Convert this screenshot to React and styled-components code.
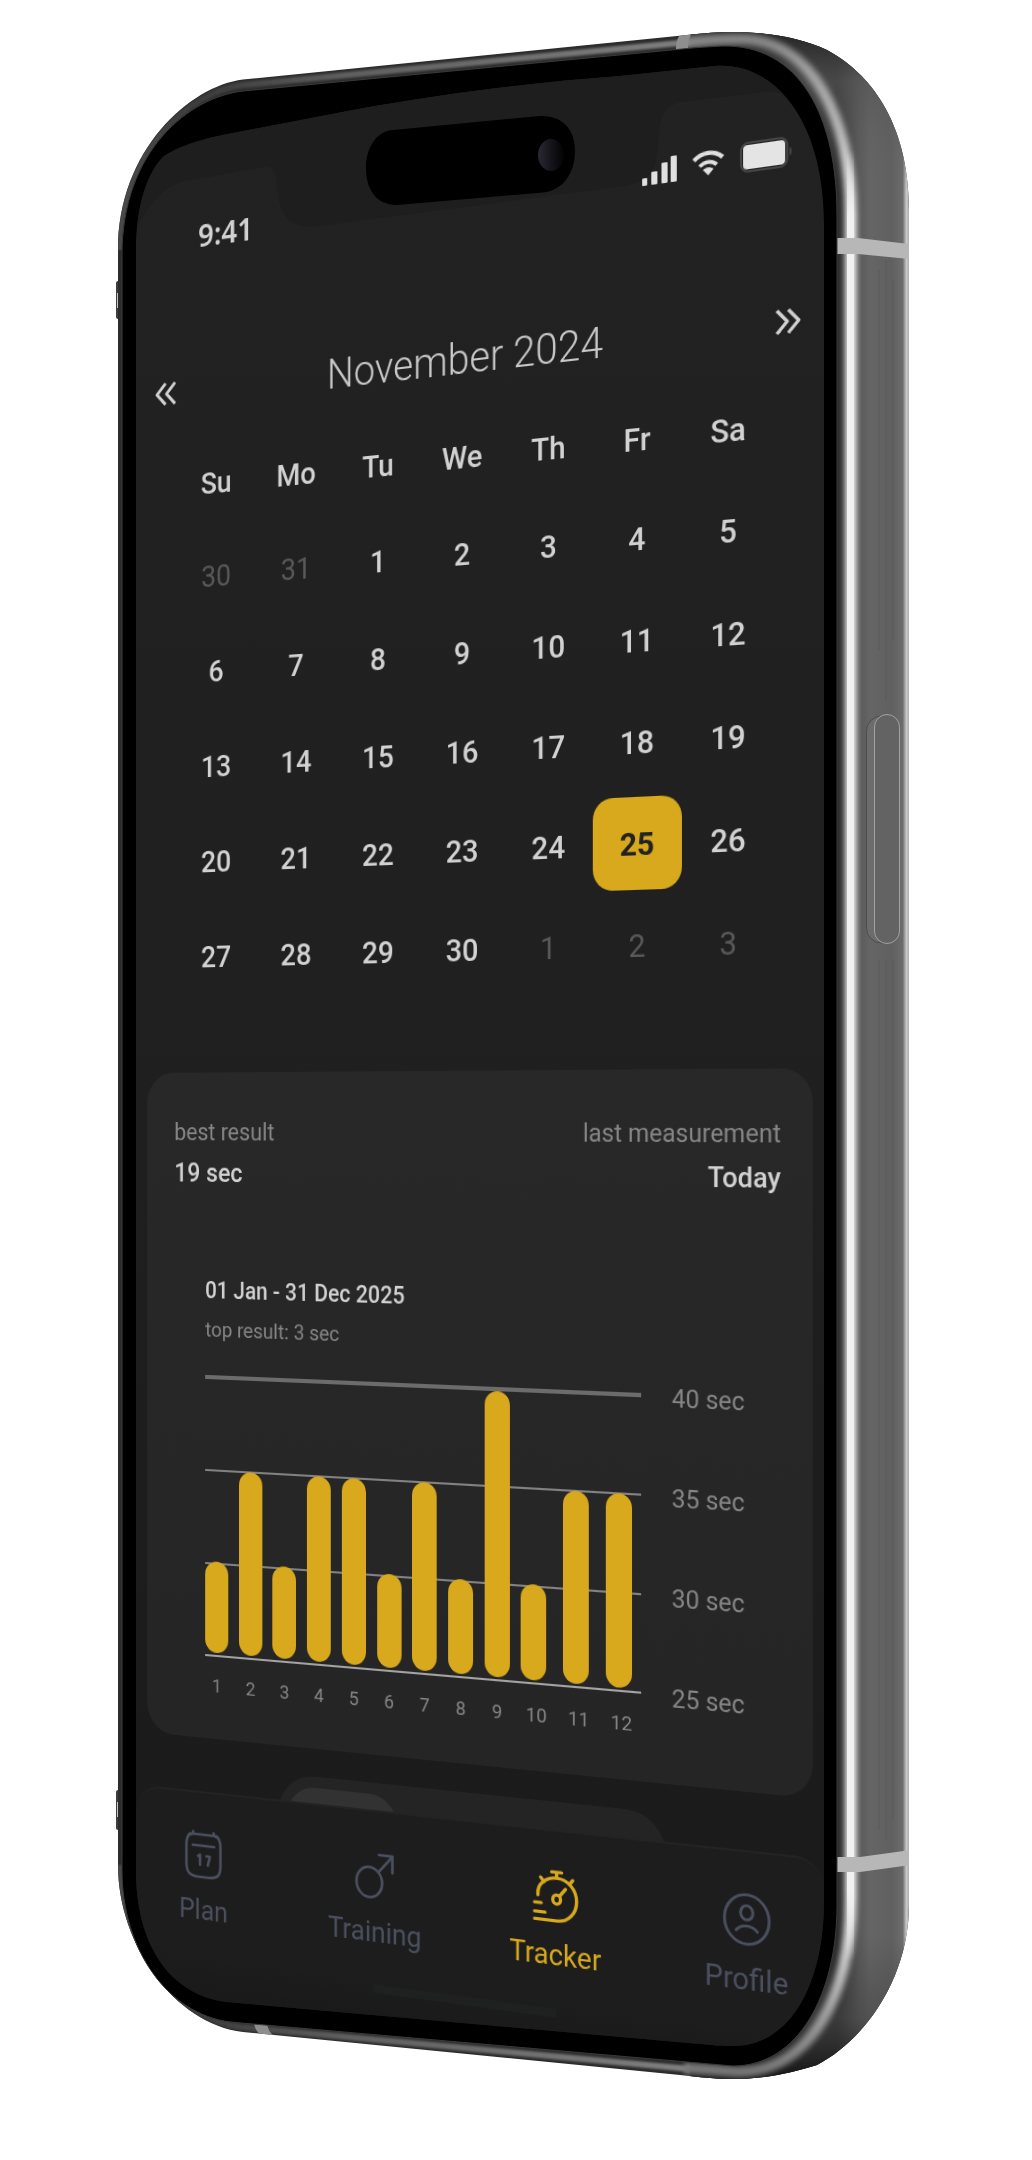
import React, { useState } from "react";
import styled, { createGlobalStyle } from "styled-components";

const GlobalStyle = createGlobalStyle`
  *, *::before, *::after { box-sizing: border-box; }
  body { margin: 0; background: #fff; }
`;

const colors = {
  text: "#d2d2d2",
  soft: "#868686",
  muted: "#595959",
  accent: "#d8a91d",
  nav: "#4b5060",
  ink: "#222222",
};

/* ---------- layout ---------- */

const Stage = styled.main`
  display: flex;
  justify-content: center;
  min-height: 100vh;
  padding: 24px 0 48px;
`;

const Phone = styled.div`
  position: relative;
  flex: none;
  width: 800px;
`;

const FrameArt = styled.svg`
  position: absolute;
  inset: 0;
  display: block;
`;

const Glass = styled.div`
  position: relative;
  height: 100%;
  padding: 0 65px 64px 20px;
  clip-path: url(#glass-clip);
`;

const Screen = styled.div`
  display: flex;
  flex-direction: column;
  transform-origin: 0 1093px;
  transform: perspective(3550px) rotateY(-30deg);
  color: ${colors.text};
  font-family: Roboto, "Liberation Sans", sans-serif;
`;

const StatusBar = styled.header`
  display: flex;
  align-items: center;
  justify-content: space-between;
  height: 48px;
  margin-top: 196px;
  padding: 0 30px 0 71px;
`;

const Clock = styled.time`
  font: 600 31px/48px "Noto Sans", sans-serif;
`;

const StatusIcons = styled.div`
  display: flex;
  align-items: center;
  gap: 15px;
`;

const MonthBar = styled.div`
  display: flex;
  align-items: center;
  justify-content: space-between;
  height: 60px;
  margin-top: 99px;
  padding: 0 18px;
`;

const MonthTitle = styled.h1`
  margin: 0;
  font-size: 41px;
  line-height: 60px;
  font-weight: 300;
  color: #c8c8c8;
`;

const IconButton = styled.button`
  display: grid;
  place-items: center;
  width: 32px;
  height: 40px;
  padding: 0;
  border: 0;
  background: none;
  color: ${colors.text};
  cursor: pointer;
`;

const CalendarSection = styled.section`
  margin: 18px 47px 0;
`;

const CalendarTable = styled.table`
  width: 100%;
  border-collapse: collapse;
  table-layout: fixed;
`;

const WeekdayCell = styled.th`
  height: 90px;
  padding: 0;
  font-size: 30px;
  font-weight: 500;
`;

const DayCell = styled.td`
  height: 94px;
  padding: 0;
`;

const DayButton = styled.button`
  display: block;
  width: 100%;
  height: 86px;
  padding: 0;
  border: 0;
  border-radius: 20px;
  background: ${(p) => (p.$selected ? colors.accent : "transparent")};
  color: ${(p) => (p.$selected ? colors.ink : p.$outside ? colors.muted : colors.text)};
  font-family: inherit;
  font-size: 30px;
  font-weight: ${(p) => (p.$selected ? 700 : p.$outside ? 400 : 500)};
  cursor: pointer;
`;

const Card = styled.section`
  height: 658px;
  margin: 68px 11px 0 13px;
  padding: 39px 30px 0 31px;
  border-radius: 30px;
  background: linear-gradient(180deg, #282828, #252525);
`;

const Summary = styled.dl`
  display: flex;
  justify-content: space-between;
  margin: 0;
`;

const Stat = styled.div`
  text-align: ${(p) => (p.$end ? "right" : "left")};
`;

const StatLabel = styled.dt`
  font-size: 24px;
  line-height: 40px;
  color: ${colors.soft};
`;

const StatValue = styled.dd`
  margin: 0;
  font-size: 26px;
  line-height: 40px;
  font-weight: 500;
`;

const ChartBlock = styled.div`
  padding: 78px 0 0 35px;
`;

const ChartTitle = styled.h2`
  margin: 0;
  font-size: 23px;
  line-height: 38px;
  font-weight: 500;
`;

const ChartNote = styled.p`
  margin: 0 0 15px;
  font-size: 21px;
  line-height: 38px;
  color: ${colors.soft};
`;

const ChartGrid = styled.div`
  display: grid;
  grid-template-columns: 460px auto;
  column-gap: 30px;
`;

const Plot = styled.div`
  display: grid;
  align-items: start;
  padding-top: 11px;
`;

const GridLines = styled.div`
  grid-area: 1 / 1;
  display: flex;
  flex-direction: column;
  justify-content: space-between;
  height: 278px;
`;

const GridLine = styled.span`
  height: ${(p) => (p.$top ? 4 : 2)}px;
  background: ${(p) => (p.$base ? "#a3a3a3" : p.$top ? "#6c6c6c" : "#828282")};
`;

const Bars = styled.ol`
  grid-area: 1 / 1;
  display: flex;
  justify-content: space-between;
  width: 456px;
  margin: 0;
  padding: 0;
  list-style: none;
`;

const BarColumn = styled.li`
  display: flex;
  flex-direction: column;
  justify-content: flex-end;
  width: ${(p) => (p.$wide ? 31 : 26)}px;
  height: 322px;
`;

const Bar = styled.span`
  width: 26px;
  border-radius: 13px;
  background: ${colors.accent};
`;

const BarLabel = styled.span`
  margin-top: 18px;
  font-size: 19px;
  line-height: 30px;
  text-align: center;
  color: ${colors.soft};
`;

const Scale = styled.div`
  display: flex;
  flex-direction: column;
  justify-content: space-between;
  height: 306px;
  font-size: 24px;
  line-height: 30px;
  color: ${colors.soft};
`;

const Peek = styled.div`
  height: 26px;
  margin-top: 27px;
  padding: 0 151px 0 160px;
  overflow: hidden;
`;

const Segments = styled.div`
  height: 80px;
  padding: 11px;
  border-radius: 40px;
  background: #242424;
`;

const ActiveSegment = styled.div`
  width: 118px;
  height: 58px;
  border-radius: 29px;
  background: #323232;
`;

const NavBar = styled.nav`
  display: flex;
  align-items: flex-start;
  justify-content: space-between;
  height: 225px;
  padding: 36px 10px 0 13px;
  border-top: 2px solid #232323;
  border-radius: 28px 28px 0 0;
  background: linear-gradient(180deg, #1d1d1d 0 70%, #181818);
`;

const NavLink = styled.a`
  display: flex;
  flex-direction: column;
  align-items: center;
  gap: 12px;
  width: 128px;
  color: ${(p) => (p.$active ? colors.accent : colors.nav)};
  font-size: 28px;
  line-height: 36px;
  text-decoration: none;
`;

const NavIcon = styled.span`
  display: grid;
  place-items: center;
  height: 50px;
`;

const HomeIndicator = styled.span`
  width: 190px;
  height: 8px;
  margin: -57px 0 0 264px;
  background: #1f2020;
`;

/* ---------- data ---------- */

const weekdays = ["Su", "Mo", "Tu", "We", "Th", "Fr", "Sa"];

const weeks = [
  [30, 31, 1, 2, 3, 4, 5],
  [6, 7, 8, 9, 10, 11, 12],
  [13, 14, 15, 16, 17, 18, 19],
  [20, 21, 22, 23, 24, 25, 26],
  [27, 28, 29, 30, 1, 2, 3],
];

const isOutside = (week, day) => (week === 0 && day > 7) || (week === 4 && day < 7);

const results = [30, 35, 30, 35, 35, 30, 35, 30, 40, 30, 35, 35];
const barHeight = (seconds) => (seconds - 25) * 18;
const scale = [40, 35, 30, 25];

/* ---------- device artwork ---------- */

const silhouette =
  "M118 250C118 150 190 86 243 79.500L687 35C705 33 718 32 733 32C765 32 800 37 827 50C868 72 909 120 909 210L909 1905C909 1975 868 2038 817 2065C795 2072 765 2079 733 2079C715 2079 700 2077 680 2075L243 2032C175 2024 118 1945 118 1865Z";
const bezel =
  "M122 255C122 150 190 97 243 91L687 48.500C697 47.500 705 47 715 46.500C792 40 837 105 837 215L837 1905C837 1995 798 2066 733 2066L230 2022C168 2014 122 1950 122 1870Z";
const glass =
  "M136 250C136 205 148 172 163 157C178 146 205 138 233 133L353 110C450 92 540 82 620 76L715 66C775 62 824 120 824 225L824 1900C824 1985 790 2046 733 2046C720 2046 712 2045 700 2044L227 2002C170 1995 136 1945 136 1870Z";
const rim =
  "M684 42.500C705 40 722 39 740 39C812 39 851 118 851 215L851 1900C851 1995 810 2072 738 2072L684 2068";
const topEdge = "M120 250C120 152 190 91 243 85L690 42";
const bottomEdge = "M120 1865C120 1945 172 2018 240 2027L690 2069";

function DeviceFrame() {
  return (
    <FrameArt viewBox="116 24 800 2064" width="800" height="2064" aria-hidden="true">
      <defs>
        <clipPath id="glass-clip" clipPathUnits="userSpaceOnUse">
          <path d={glass} transform="translate(-116 -24)" />
        </clipPath>
        <clipPath id="body-clip">
          <path d={silhouette} />
        </clipPath>
        <clipPath id="glass-area">
          <path d={glass} />
        </clipPath>
        <linearGradient id="side" gradientUnits="userSpaceOnUse" x1="837" x2="910" y1="0" y2="0">
          <stop offset="0" stopColor="#2a2a2a" />
          <stop offset=".3" stopColor="#585858" />
          <stop offset=".45" stopColor="#656565" />
          <stop offset=".75" stopColor="#606060" />
          <stop offset=".9" stopColor="#6c6c6c" />
          <stop offset=".95" stopColor="#c9c9c9" />
          <stop offset="1" stopColor="#a5a5a5" />
        </linearGradient>
        <linearGradient id="ends" gradientUnits="userSpaceOnUse" x1="0" x2="0" y1="30" y2="2080">
          <stop offset="0" stopColor="#222" stopOpacity=".9" />
          <stop offset=".025" stopColor="#555" stopOpacity=".7" />
          <stop offset=".08" stopColor="#666" stopOpacity="0" />
          <stop offset=".93" stopColor="#444" stopOpacity="0" />
          <stop offset=".97" stopColor="#444" stopOpacity=".6" />
          <stop offset="1" stopColor="#111" stopOpacity=".95" />
        </linearGradient>
        <linearGradient id="shine" gradientUnits="userSpaceOnUse" x1="0" x2="0" y1="30" y2="2080">
          <stop offset="0" stopColor="#7c7c7c" />
          <stop offset=".02" stopColor="#9e9e9e" />
          <stop offset=".05" stopColor="#b4b4b4" />
          <stop offset=".09" stopColor="#f2f2f2" />
          <stop offset=".91" stopColor="#f2f2f2" />
          <stop offset=".96" stopColor="#a8a8a8" />
          <stop offset="1" stopColor="#707070" />
        </linearGradient>
        <linearGradient id="core" gradientUnits="userSpaceOnUse" x1="0" x2="0" y1="150" y2="1960">
          <stop offset="0" stopColor="#f1f1f1" stopOpacity="0" />
          <stop offset=".04" stopColor="#f1f1f1" />
          <stop offset=".96" stopColor="#f1f1f1" />
          <stop offset="1" stopColor="#f1f1f1" stopOpacity="0" />
        </linearGradient>
        <linearGradient id="edge" gradientUnits="userSpaceOnUse" x1="118" x2="700" y1="0" y2="0">
          <stop offset="0" stopColor="#4a4a4a" />
          <stop offset=".15" stopColor="#3c3c3c" />
          <stop offset=".4" stopColor="#606060" />
          <stop offset="1" stopColor="#808080" />
        </linearGradient>
        <linearGradient id="screen-fill" x1="0" x2="0" y1="0" y2="1">
          <stop offset="0" stopColor="#222" />
          <stop offset=".45" stopColor="#202020" />
          <stop offset=".8" stopColor="#1c1c1c" />
          <stop offset="1" stopColor="#1a1a1a" />
        </linearGradient>
        <linearGradient id="lens" x1="0" x2="1" y1="0" y2="0">
          <stop offset="0" stopColor="#2b2933" />
          <stop offset=".5" stopColor="#15141b" />
          <stop offset="1" stopColor="#030304" />
        </linearGradient>
        <filter id="soft" filterUnits="userSpaceOnUse" x="100" y="0" width="830" height="2100">
          <feGaussianBlur stdDeviation="2" />
        </filter>
        <filter id="soft-edge" filterUnits="userSpaceOnUse" x="100" y="0" width="830" height="2100">
          <feGaussianBlur stdDeviation="1" />
        </filter>
      </defs>

      <rect x="116" y="281" width="6" height="38" rx="2" fill="#3e3e3e" />
      <rect x="117" y="293" width="4" height="15" fill="#c8c8c8" />
      <rect x="116" y="1790" width="6" height="40" rx="2" fill="#3e3e3e" />
      <rect x="117" y="1802" width="4" height="15" fill="#c8c8c8" />
      <path d={silhouette} fill="#2c2c2c" />
      <g clipPath="url(#body-clip)">
        <path d="M690 24H920V2088H690Z" fill="url(#side)" />
        <rect x="690" y="24" width="226" height="2064" fill="url(#ends)" />
        <g filter="url(#soft-edge)" fill="none" stroke="url(#edge)" strokeWidth="6">
          <path d={topEdge} />
          <path d={bottomEdge} />
        </g>
        <g filter="url(#soft)" fill="none">
          <path d={rim} stroke="url(#shine)" strokeWidth="15" opacity=".45" />
          <path d={rim} stroke="url(#shine)" strokeWidth="8" />
        </g>
        <rect x="847" y="150" width="7" height="1810" fill="url(#core)" />
        <path d="M879 270V650M886 260V700M893 280V640M886 960V1840M879 960V1830M893 960V1820" fill="none" stroke="#595959" strokeWidth="2" opacity=".5" />
        <path d="M837 238H858L910 244V259L858 254H837Z" fill="#b7b7b7" />
        <path d="M837 1857H860L910 1850V1865L860 1872H837Z" fill="#b7b7b7" />
        <path d="M676 49C676 41 678 36 683 32L693 32C689 37 688 41 688 49Z" fill="#8e8e8e" />
        <path d="M254 2021H267C267 2027 269 2032 274 2036H262C257 2032 254 2028 254 2021Z" fill="#8e8e8e" />
      </g>
      <rect x="866.500" y="716" width="33" height="227" rx="15" fill="#6c6c6c" stroke="#4c4c4c" />
      <rect x="874.500" y="714.500" width="25" height="229" rx="12.500" fill="#636363" stroke="#a2a2a2" />
      <path d={bezel} fill="#000" stroke="#3a3a3a" strokeWidth="1" />
      <path d={glass} fill="url(#screen-fill)" />
      <path
        clipPath="url(#glass-area)"
        d="M130 240C150 200 165 186 185 181L262 167.500C273 165.500 276 171 277 186C279 215 290 228 312 227L625 186C650 182 658 170 659 134C660 112 667 105 682 102L772 91L800 100V50H130Z"
        fill="#1e1e1e"
      />
      <path
        d="M393 130L540 116C562 115 575 129 575 151C575 174 562 191 543 192.500L397 205C375 205 366 188 366 168C366 147 377 131 393 130Z"
        fill="#000"
      />
      <ellipse cx="551" cy="155" rx="13" ry="16" fill="url(#lens)" />
    </FrameArt>
  );
}

/* ---------- icons ---------- */

const stroke = {
  fill: "none",
  stroke: "currentColor",
  strokeWidth: 2.6,
  strokeLinecap: "round",
  strokeLinejoin: "round",
  preserveAspectRatio: "none",
};

const SignalIcon = () => (
  <svg width="34" height="25" viewBox="0 0 34 25" fill="#e0e0e0" aria-hidden="true">
    <rect x="0" y="18" width="5" height="7" rx="1" />
    <rect x="9" y="13" width="6" height="12" rx="1" />
    <rect x="19" y="6" width="6" height="19" rx="1" />
    <rect x="28" y="1" width="6" height="24" rx="1" />
  </svg>
);

const WifiIcon = () => (
  <svg width="31" height="24" viewBox="0 0 30 24" fill="none" stroke="#e0e0e0" strokeWidth="4" preserveAspectRatio="none" aria-hidden="true">
    <path d="M1.500 8.500C9 1 21 1 28.500 8.500" />
    <path d="M7 14.500C11.500 10 18.500 10 23 14.500" strokeWidth="3.500" />
    <path d="M15 23.500L10 18C13 15.500 17 15.500 20 18Z" fill="#e0e0e0" stroke="none" />
  </svg>
);

const BatteryIcon = () => (
  <svg width="50" height="30" viewBox="0 0 50 30" aria-hidden="true">
    <rect x="1" y="2" width="44" height="26" rx="7" fill="none" stroke="#444" strokeWidth="2" />
    <rect x="3" y="4" width="40" height="22" rx="4" fill="#e4e4e4" />
    <path d="M47 11C50 12 50 18 47 19Z" fill="#444" />
  </svg>
);

const Chevrons = ({ flip }) => (
  <svg width="25" height="25" viewBox="0 0 23 25" {...stroke} strokeWidth="3" strokeLinecap="butt" aria-hidden="true">
    <path d={flip ? "M2 2l9 10.500-9 10.500M12 2l9 10.500-9 10.500" : "M11 2L2 12.500l9 10.500M21 2l-9 10.500 9 10.500"} />
  </svg>
);

const PlanIcon = () => (
  <svg width="44" height="48" viewBox="0 0 40 48" {...stroke} aria-hidden="true">
    <path d="M7 4C3.500 6 2.500 10 2.500 15V33C2.500 43 6 46 15 46H25C34 46 37.500 43 37.500 33V15C37.500 10 36.500 6 33 4" />
    <path d="M9.500 1.500C9.500 4 8 5 5.500 5M30.500 1.500C30.500 4 32 5 34.500 5M9.500 4H30.500M9 15H31M14.500 25.500L16.500 24V34M23 25H26.500C26 28.500 25 31 24.500 34" />
  </svg>
);

const TrainingIcon = () => (
  <svg width="44" height="48" viewBox="0 0 40 48" {...stroke} aria-hidden="true">
    <ellipse cx="15" cy="31" rx="12.500" ry="14.500" />
    <path d="M24 20.500L37 5M24.500 4H37.500V20" />
  </svg>
);

const TrackerIcon = () => (
  <svg width="47" height="50" viewBox="0 0 42 50" {...stroke} aria-hidden="true">
    <path strokeWidth="3" d="M5 25C4 14 13 7.500 22 7.500C32 7.500 40 16 40 27.500C40 39 32 47.500 23 47.500H2" />
    <path strokeWidth="3" d="M17.500 2H26.500M22 2V7M7.500 8L10.500 12M36.500 8L33.500 12M2 32H8M2 40.500H11.500M25 23.500L30 17" />
    <ellipse strokeWidth="3" cx="22" cy="27.500" rx="3.500" ry="4.200" />
  </svg>
);

const ProfileIcon = () => (
  <svg width="47" height="48" viewBox="0 0 44 48" {...stroke} aria-hidden="true">
    <ellipse cx="22" cy="24" rx="20" ry="22.500" />
    <ellipse cx="22" cy="18" rx="5.500" ry="6.500" />
    <path d="M12.500 34.500C17 28.500 27 28.500 31.500 34.500" />
  </svg>
);

const tabs = [
  { name: "Plan", Icon: PlanIcon },
  { name: "Training", Icon: TrainingIcon },
  { name: "Tracker", Icon: TrackerIcon },
  { name: "Profile", Icon: ProfileIcon },
];

/* ---------- sections ---------- */

function Calendar() {
  const [selected, setSelected] = useState("3-25");
  return (
    <CalendarSection>
      <CalendarTable>
        <thead>
          <tr>
            {weekdays.map((day) => (
              <WeekdayCell key={day} scope="col">{day}</WeekdayCell>
            ))}
          </tr>
        </thead>
        <tbody>
          {weeks.map((week, row) => (
            <tr key={row}>
              {week.map((day) => {
                const id = `${row}-${day}`;
                return (
                  <DayCell key={id}>
                    <DayButton
                      type="button"
                      aria-pressed={selected === id}
                      $selected={selected === id}
                      $outside={isOutside(row, day)}
                      onClick={() => setSelected(id)}
                    >
                      {day}
                    </DayButton>
                  </DayCell>
                );
              })}
            </tr>
          ))}
        </tbody>
      </CalendarTable>
    </CalendarSection>
  );
}

function ResultsCard() {
  return (
    <Card>
      <Summary>
        <Stat>
          <StatLabel>best result</StatLabel>
          <StatValue>19 sec</StatValue>
        </Stat>
        <Stat $end>
          <StatLabel>last measurement</StatLabel>
          <StatValue>Today</StatValue>
        </Stat>
      </Summary>
      <ChartBlock>
        <ChartTitle>01 Jan - 31 Dec 2025</ChartTitle>
        <ChartNote>top result: 3 sec</ChartNote>
        <ChartGrid>
          <Plot>
            <GridLines>
              {scale.map((value) => (
                <GridLine key={value} $top={value === 40} $base={value === 25} />
              ))}
            </GridLines>
            <Bars>
              {results.map((value, index) => (
                <BarColumn key={index} $wide={index > 8}>
                  <Bar style={{ height: barHeight(value) }} />
                  <BarLabel>{index + 1}</BarLabel>
                </BarColumn>
              ))}
            </Bars>
          </Plot>
          <Scale>
            {scale.map((value) => (
              <span key={value}>{value} sec</span>
            ))}
          </Scale>
        </ChartGrid>
      </ChartBlock>
    </Card>
  );
}

export default function App() {
  return (
    <Stage>
      <GlobalStyle />
      <Phone>
        <DeviceFrame />
        <Glass>
          <Screen>
            <StatusBar>
              <Clock>9:41</Clock>
              <StatusIcons>
                <SignalIcon />
                <WifiIcon />
                <BatteryIcon />
              </StatusIcons>
            </StatusBar>
            <MonthBar>
              <IconButton type="button" aria-label="Previous month">
                <Chevrons />
              </IconButton>
              <MonthTitle>November 2024</MonthTitle>
              <IconButton type="button" aria-label="Next month">
                <Chevrons flip />
              </IconButton>
            </MonthBar>
            <Calendar />
            <ResultsCard />
            <Peek>
              <Segments>
                <ActiveSegment />
              </Segments>
            </Peek>
            <NavBar>
              {tabs.map(({ name, Icon }) => (
                <NavLink
                  key={name}
                  href={`#${name.toLowerCase()}`}
                  $active={name === "Tracker"}
                  aria-current={name === "Tracker" ? "page" : undefined}
                >
                  <NavIcon>
                    <Icon />
                  </NavIcon>
                  {name}
                </NavLink>
              ))}
            </NavBar>
            <HomeIndicator />
          </Screen>
        </Glass>
      </Phone>
    </Stage>
  );
}
